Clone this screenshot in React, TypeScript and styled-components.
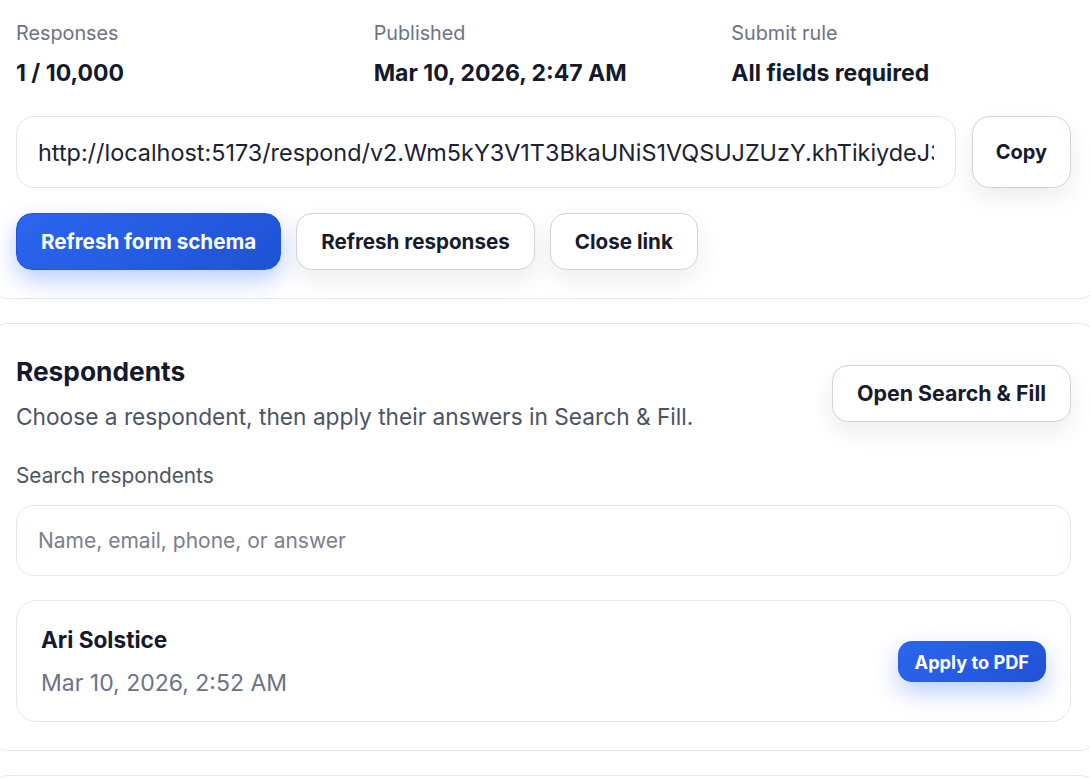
import styled, { createGlobalStyle } from 'styled-components'

const GlobalStyle = createGlobalStyle`
  html, body {
    margin: 0;
    background: #ffffff;
    overflow: hidden;
  }
  body {
    font-family: Inter, "Noto Sans", sans-serif;
    color: #161b2e;
  }
`;

const stats = [
  { label: 'Responses', value: '1 / 10,000' },
  { label: 'Published', value: 'Mar 10, 2026, 2:47 AM' },
  { label: 'Submit rule', value: 'All fields required' },
];

function App() {
  return (
    <>
      <GlobalStyle />
      <Stack>
        <Card>
          <StatsGrid>
            {stats.map((s) => (
              <Stat key={s.label}>
                <StatLabel>{s.label}</StatLabel>
                <StatValue>{s.value}</StatValue>
              </Stat>
            ))}
          </StatsGrid>
          <LinkRow>
            <LinkField
              readOnly
              value="http://localhost:5173/respond/v2.Wm5kY3V1T3BkaUNiS1VQSUJZUzY.khTikiydeJ3Vb0pQx"
            />
            <Button $tall>Copy</Button>
          </LinkRow>
          <ButtonRow>
            <Button $primary>Refresh form schema</Button>
            <Button>Refresh responses</Button>
            <Button>Close link</Button>
          </ButtonRow>
        </Card>

        <Card>
          <Header>
            <div>
              <Title>Respondents</Title>
              <Subtitle>Choose a respondent, then apply their answers in Search &amp; Fill.</Subtitle>
            </div>
            <Button $wide>Open Search &amp; Fill</Button>
          </Header>
          <FieldLabel>Search respondents</FieldLabel>
          <SearchField placeholder="Name, email, phone, or answer" />
          <Respondent>
            <div>
              <Name>Ari Solstice</Name>
              <When>Mar 10, 2026, 2:52 AM</When>
            </div>
            <SmallButton>Apply to PDF</SmallButton>
          </Respondent>
        </Card>

        <Card />
      </Stack>
    </>
  )
}

const Stack = styled.div`
  margin: -10px 0 0 -14px;
  width: 1115px;
  display: flex;
  flex-direction: column;
  gap: 24px;
`;

const Card = styled.section`
  background: #ffffff;
  border: 1px solid #e4e7ec;
  border-radius: 22px;
  padding: 29px 29px 28px 29px;
  min-height: 60px;
`;

const StatsGrid = styled.div`
  display: grid;
  grid-template-columns: repeat(3, 1fr);
  gap: 18px;
`;

const Stat = styled.div`
  display: flex;
  flex-direction: column;
  gap: 11px;
`;

const StatLabel = styled.div`
  font-size: 19.8px;
  line-height: 27px;
  color: #6b7385;
`;

const StatValue = styled.div`
  font-size: 23px;
  line-height: 30px;
  font-weight: 700;
  color: #141a2c;
`;

const LinkRow = styled.div`
  margin-top: 28px;
  display: flex;
  gap: 16px;
`;

const LinkField = styled.input`
  flex: 1;
  min-width: 0;
  height: 72px;
  box-sizing: border-box;
  border: 1px solid #e3e6eb;
  border-radius: 18px;
  padding: 0 21px;
  font-family: Inter, "Noto Sans", sans-serif;
  font-size: 23.4px;
  color: #1c2233;
  background: #fff;
  outline: none;
`;

const Button = styled.button<{ $primary?: boolean; $tall?: boolean; $wide?: boolean }>`
  height: ${(p) => (p.$tall ? '72px' : '57px')};
  padding: 0 ${(p) => (p.$tall ? '23px' : '24px')};
  border-radius: ${(p) => (p.$tall ? '18px' : '16px')};
  font-family: Inter, "Noto Sans", sans-serif;
  font-size: ${(p) => (p.$tall ? '20px' : p.$wide ? '21.4px' : '20.6px')};
  font-weight: 700;
  white-space: nowrap;
  cursor: pointer;
  border: 1px solid ${(p) => (p.$primary ? '#2157dc' : '#d0d4db')};
  color: ${(p) => (p.$primary ? '#ffffff' : '#161b2e')};
  background: ${(p) => (p.$primary ? 'linear-gradient(135deg, #2b66ee, #1f52d6)' : '#ffffff')};
  box-shadow: ${(p) =>
    p.$primary ? '0 10px 24px rgba(37, 99, 235, 0.32)' : '0 10px 24px rgba(15, 23, 42, 0.08)'};
`;

const ButtonRow = styled.div`
  margin-top: 25px;
  display: flex;
  gap: 15px;
`;

const Header = styled.div`
  margin-top: 1px;
  display: flex;
  align-items: center;
  justify-content: space-between;
`;

const Title = styled.h2`
  margin: 0;
  font-size: 26.3px;
  line-height: 36px;
  font-weight: 700;
  color: #141a2c;
`;

const Subtitle = styled.p`
  margin: 12px 0 0;
  font-size: 22.7px;
  line-height: 30px;
  color: #4b5466;
`;

const FieldLabel = styled.div`
  margin-top: 30px;
  font-size: 20.8px;
  line-height: 28px;
  color: #4b5466;
`;

const SearchField = styled.input`
  margin-top: 15px;
  display: block;
  width: 100%;
  box-sizing: border-box;
  height: 71px;
  border: 1px solid #e3e6eb;
  border-radius: 18px;
  padding: 0 21px;
  font-family: Inter, "Noto Sans", sans-serif;
  font-size: 21px;
  color: #1c2233;
  outline: none;

  &::placeholder {
    color: #7a808c;
  }
`;

const Respondent = styled.div`
  margin-top: 24px;
  border: 1px solid #e6e8ec;
  border-radius: 20px;
  padding: 24px 24px 23px;
  display: flex;
  align-items: center;
  justify-content: space-between;
  background: #ffffff;
`;

const Name = styled.div`
  font-size: 22.6px;
  line-height: 30px;
  font-weight: 700;
  color: #141a2c;
`;

const When = styled.div`
  margin-top: 13px;
  font-size: 23px;
  line-height: 30px;
  color: #6b7385;
`;

const SmallButton = styled.button`
  height: 41px;
  padding: 0 17px;
  border: none;
  border-radius: 14px;
  font-family: Inter, "Noto Sans", sans-serif;
  font-size: 18.2px;
  font-weight: 700;
  color: #ffffff;
  background: linear-gradient(135deg, #2b66ee, #1f52d6);
  box-shadow: 0 10px 24px rgba(37, 99, 235, 0.32);
  cursor: pointer;
`;

export default App
